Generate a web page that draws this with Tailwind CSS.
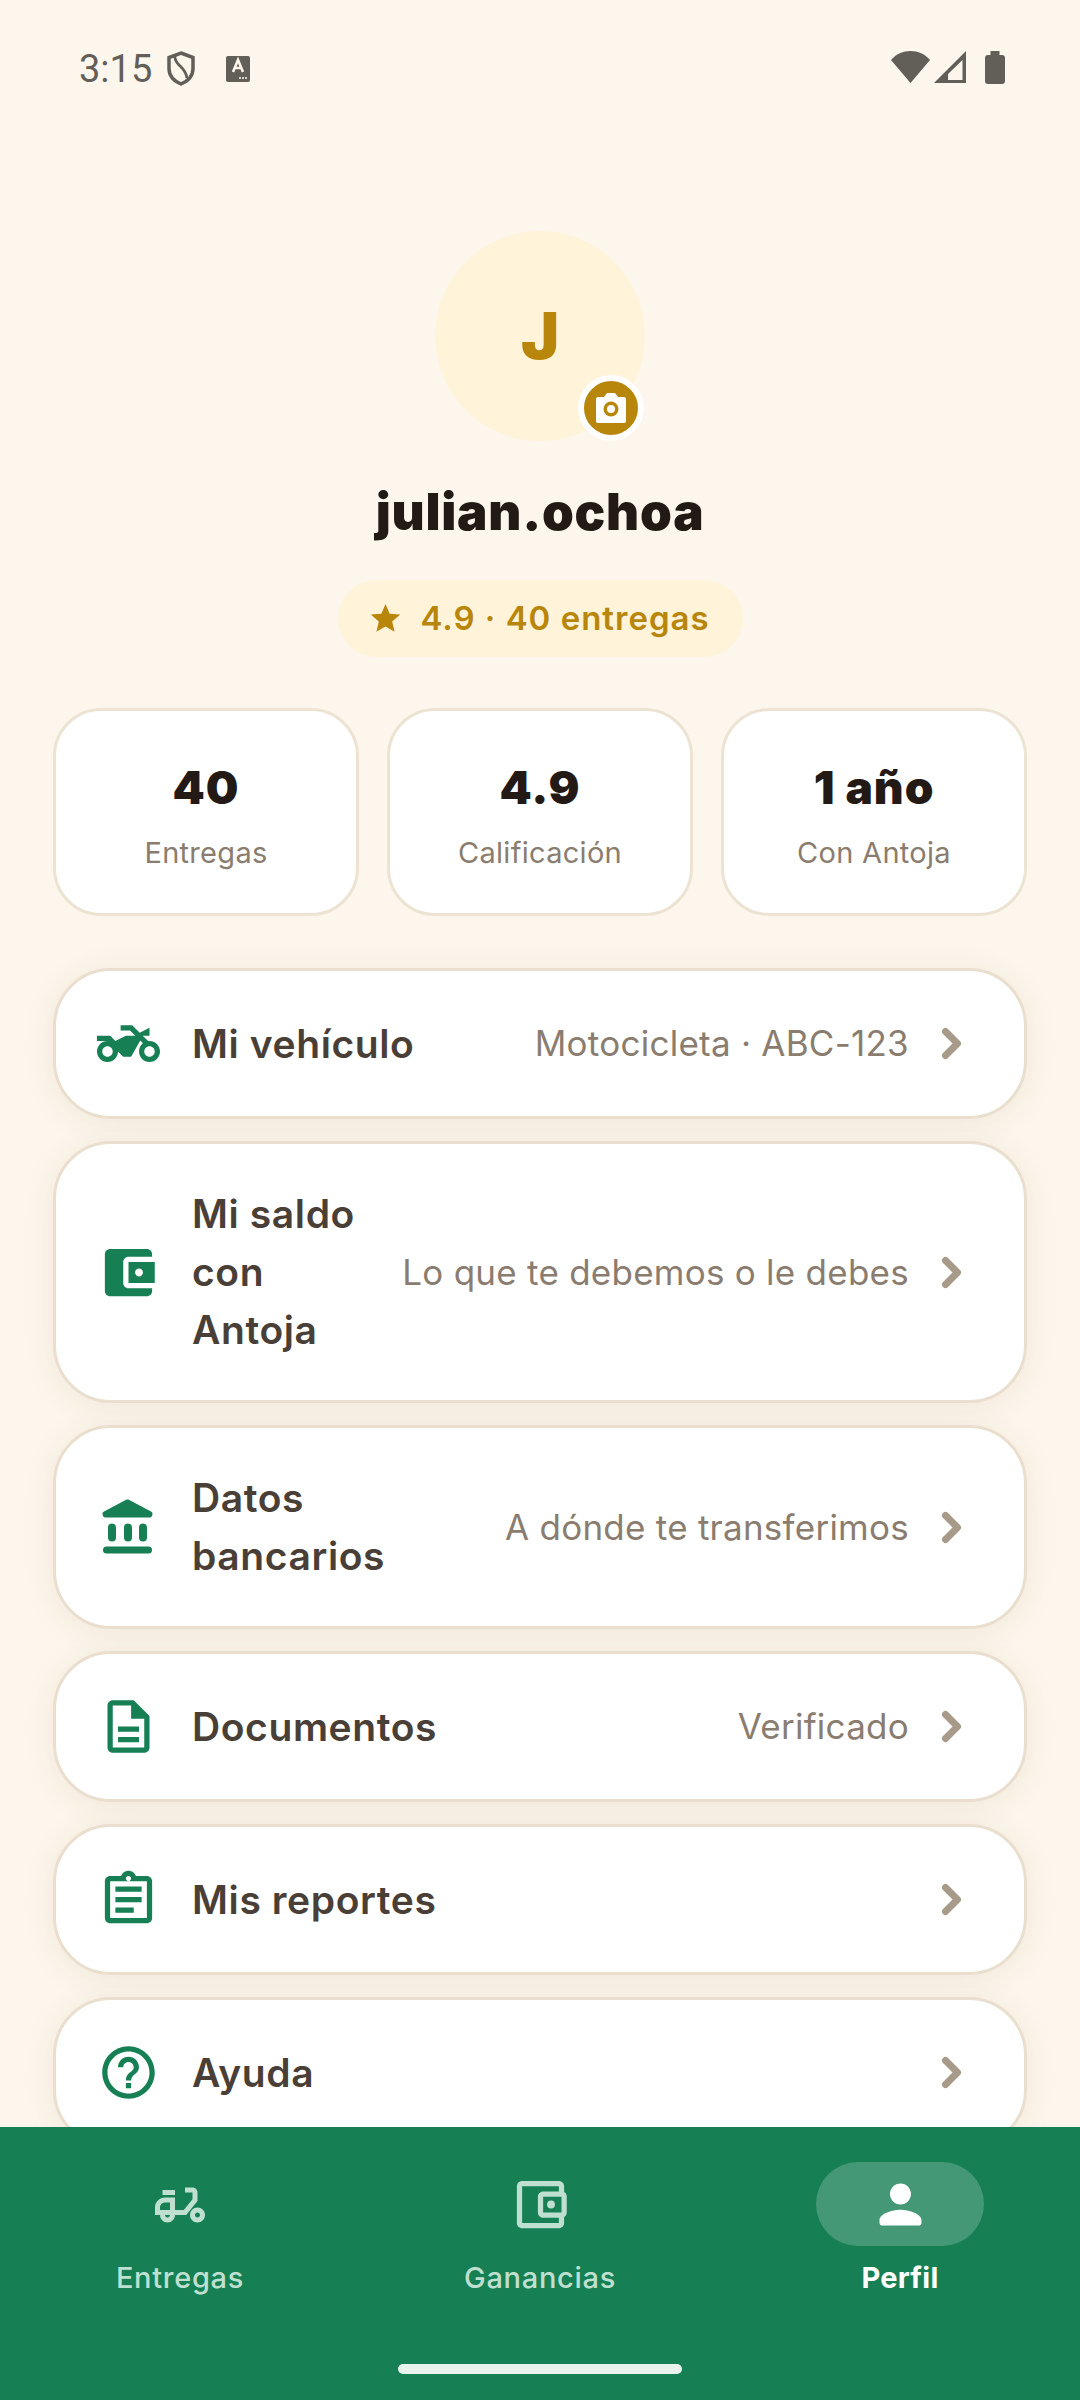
<!DOCTYPE html>
<html lang="es">
<head>
  <meta charset="UTF-8" />
  <title>Perfil</title>
  <script src="https://cdn.jsdelivr.net/npm/@tailwindcss/browser@4"></script>
</head>
<body class="bg-[#FDF6EC] font-['Inter',sans-serif]">
  <div class="h-[2400px] w-[1080px] flex flex-col overflow-hidden">

    <!-- Contenido -->
    <main class="flex-1 overflow-hidden relative">
      <!-- Barra de estado -->
      <div class="h-[135px] pl-[79px] pr-[75px] pt-[51px] flex items-start justify-between text-[#625F59]">
        <div class="flex items-center h-[35px]">
          <span class="font-['Roboto',sans-serif] text-[38px] leading-none w-[88px]">3:15</span>
          <svg class="w-[28px] h-[35px]" viewBox="0 0 28 35" fill="none" stroke="currentColor" stroke-width="3.500"><path d="M14 2l12 4.500v11c0 7-5 12.500-12 15.500C7 30 2 24.500 2 17.500v-11z"/><path d="M8 4c-.5 4 1 7 4 10s7 6 8 13" stroke-width="2.800"/></svg>
          <svg class="w-[24px] h-[26px] ml-[31px]" viewBox="0 0 24 26"><rect width="24" height="26" rx="2" fill="currentColor"/><path d="M7 16l5-12 5 12M9 12h6" stroke="#FDF6EC" stroke-width="2.600" fill="none"/><circle cx="14" cy="22" r="1" fill="#FDF6EC"/><circle cx="17" cy="22" r="1" fill="#FDF6EC"/><circle cx="20" cy="22" r="1" fill="#FDF6EC"/></svg>
        </div>
        <div class="flex items-start">
          <svg class="w-[39px] h-[32px]" viewBox="0 0 39 32"><path d="M0 9C5 3 12 0 19.500 0S34 3 39 9L19.500 32z" fill="currentColor"/></svg>
          <svg class="w-[32px] h-[32px] ml-[4px]" viewBox="0 0 32 32"><path fill-rule="evenodd" d="M0 32 32 0v32zM14 29h14.500V9L14 23z" fill="currentColor"/></svg>
          <svg class="w-[20px] h-[33px] ml-[19px]" viewBox="0 0 20 33"><path d="M5.500 0h9v4H17c2 0 3 1 3 3v23c0 2-1 3-3 3H3c-2 0-3-1-3-3V7c0-2 1-3 3-3h2.500z" fill="currentColor"/></svg>
        </div>
      </div>

      <!-- Encabezado de perfil -->
      <section class="flex flex-col items-center pt-[96px]">
        <div class="relative w-[210px] h-[210px] rounded-full bg-[#FFF3D9] flex items-center justify-center">
          <span class="font-black text-[64px] leading-none text-[#B8860B]">J</span>
          <div class="absolute right-[1px] bottom-0 w-[66px] h-[66px] rounded-full bg-[#B8860B] border-[6px] border-white flex items-center justify-center">
            <svg class="w-[36px] h-[36px]" viewBox="0 0 36 36"><path d="M5 7h6l3-4h8l3 4h6c1.500 0 2 1 2 2v22c0 1-.5 2-2 2H5c-1.500 0-2-1-2-2V9c0-1 .5-2 2-2z" fill="#fff"/><circle cx="18" cy="19" r="7.500" fill="#B8860B"/><circle cx="18" cy="19" r="4" fill="#fff"/></svg>
          </div>
        </div>
        <h1 class="mt-[37px] text-[51px] leading-[68px] font-black text-[#241A15] tracking-[0.015em]">julian.ochoa</h1>
        <div class="mt-[34px] h-[77px] w-[405px] rounded-full bg-[#FFF3D9] flex items-center justify-center gap-[19px] text-[#B8860B]">
          <svg class="w-[31px] h-[29px]" viewBox="0 0 24 23"><path d="M12 0l3.300 7.700 8.400.7-6.400 5.500 1.900 8.200L12 17.800 4.800 22.100l1.900-8.200L.3 8.400l8.400-.7z" fill="currentColor"/></svg>
          <span class="text-[33px] font-semibold tracking-[0.03em]">4.9 · 40 entregas</span>
        </div>
      </section>

      <!-- Estadisticas -->
      <section class="grid grid-cols-3 gap-[28px] mx-[53px] mt-[51px]">
        <div class="h-[208px] rounded-[48px] bg-white border-[3px] border-[#EDE3D3] flex flex-col items-center pt-[46px]">
          <div class="text-[46px] leading-[60px] font-black text-[#241A15] tracking-[0.02em]">40</div>
          <div class="mt-[14px] text-[29px] tracking-[0.3px] text-[#8A7D70]">Entregas</div>
        </div>
        <div class="h-[208px] rounded-[48px] bg-white border-[3px] border-[#EDE3D3] flex flex-col items-center pt-[46px]">
          <div class="text-[46px] leading-[60px] font-black text-[#241A15] tracking-[0.02em]">4.9</div>
          <div class="mt-[14px] text-[29px] tracking-[0.3px] text-[#8A7D70]">Calificación</div>
        </div>
        <div class="h-[208px] rounded-[48px] bg-white border-[3px] border-[#EDE3D3] flex flex-col items-center pt-[46px]">
          <div class="text-[46px] leading-[60px] font-black text-[#241A15] tracking-[0.02em]">1 año</div>
          <div class="mt-[14px] text-[29px] tracking-[0.3px] text-[#8A7D70]">Con Antoja</div>
        </div>
      </section>

      <!-- Menu -->
      <section class="flex flex-col gap-[22px] mx-[53px] mt-[52px]">
        <div class="flex items-center min-h-[151px] px-[41px] py-[41px] rounded-[58px] bg-white border-[3px] border-[#EADFCE] shadow-[0_4px_32px_rgba(90,60,30,0.08)]">
          <svg class="w-[63px] h-[63px] -my-[6px] shrink-0 text-[#167F54]" viewBox="0 0 24 24" fill="currentColor"><path d="M20 11c-.18 0-.36.03-.53.05L17.410 9H20V6l-3.720 1.860L13.410 5H9v2h3.590l2 2H11l-4 2-2-2H0v2h4c-2.210 0-4 1.790-4 4s1.790 4 4 4 4-1.790 4-4l2 2h3l3.490-6.100 1.010 1.010c-.91.730-1.500 1.840-1.500 3.090 0 2.210 1.790 4 4 4s4-1.790 4-4-1.790-4-4-4zM4 17c-1.100 0-2-.9-2-2s.9-2 2-2 2 .9 2 2-.9 2-2 2zm16 0c-1.100 0-2-.9-2-2s.9-2 2-2 2 .9 2 2-.9 2-2 2z"/></svg>
          <div class="flex-1 min-w-0 ml-[32px] text-[39px] tracking-[0.6px] leading-[58px] font-[590] text-[#4A3F37]">Mi vehículo</div>
          <div class="ml-[22px] whitespace-nowrap text-[35px] tracking-[0.25px] text-[#8A7D70]">Motocicleta · ABC-123</div>
          <svg class="w-[63px] h-[63px] -my-[6px] ml-[11px] shrink-0 text-[#A89A88]" viewBox="0 0 63 63" fill="none" stroke="currentColor" stroke-width="7" stroke-linecap="round" stroke-linejoin="round"><path d="M25.500 19.500l12 12-12 12"/></svg>
        </div>
        <div class="flex items-center min-h-[151px] px-[41px] py-[41px] rounded-[58px] bg-white border-[3px] border-[#EADFCE] shadow-[0_4px_32px_rgba(90,60,30,0.08)]">
          <svg class="w-[63px] h-[63px] -my-[6px] shrink-0 text-[#167F54]" viewBox="0 0 24 24" fill="currentColor"><path d="M21 18v1c0 1.100-.9 2-2 2H5c-1.110 0-2-.9-2-2V5c0-1.100.89-2 2-2h14c1.100 0 2 .9 2 2v1h-9c-1.110 0-2 .9-2 2v8c0 1.100.89 2 2 2h9zm-9-2h10V8H12v8zm4-2.500c-.83 0-1.500-.67-1.500-1.500s.67-1.500 1.500-1.500 1.500.67 1.500 1.500-.67 1.500-1.500 1.500z"/></svg>
          <div class="flex-1 min-w-0 ml-[32px] text-[39px] tracking-[0.6px] leading-[58px] font-[590] text-[#4A3F37]">Mi saldo con Antoja</div>
          <div class="ml-[22px] whitespace-nowrap text-[35px] tracking-[0.25px] text-[#8A7D70]">Lo que te debemos o le debes</div>
          <svg class="w-[63px] h-[63px] -my-[6px] ml-[11px] shrink-0 text-[#A89A88]" viewBox="0 0 63 63" fill="none" stroke="currentColor" stroke-width="7" stroke-linecap="round" stroke-linejoin="round"><path d="M25.500 19.500l12 12-12 12"/></svg>
        </div>
        <div class="flex items-center min-h-[151px] px-[41px] py-[41px] rounded-[58px] bg-white border-[3px] border-[#EADFCE] shadow-[0_4px_32px_rgba(90,60,30,0.08)]">
          <svg class="w-[63px] h-[63px] -my-[6px] shrink-0 text-[#167F54]" viewBox="0 0 63 63" fill="currentColor"><path d="M28.700 4 7 15.500c-1 .5-1.500 1.200-1.500 2.200 0 2 1.200 3.800 3 3.800h44c1.800 0 3-1.800 3-3.800 0-1-.5-1.700-1.500-2.200L32.300 4c-1.200-.6-2.400-.6-3.600 0z"/><rect x="11" y="27.500" width="8" height="18" rx="4"/><rect x="27" y="27.500" width="8" height="18" rx="4"/><rect x="42" y="27.500" width="8" height="18" rx="4"/><rect x="6" y="50.500" width="49" height="7" rx="3.500"/></svg>
          <div class="flex-1 min-w-0 ml-[32px] text-[39px] tracking-[0.6px] leading-[58px] font-[590] text-[#4A3F37]">Datos bancarios</div>
          <div class="ml-[22px] whitespace-nowrap text-[35px] tracking-[0.25px] text-[#8A7D70]">A dónde te transferimos</div>
          <svg class="w-[63px] h-[63px] -my-[6px] ml-[11px] shrink-0 text-[#A89A88]" viewBox="0 0 63 63" fill="none" stroke="currentColor" stroke-width="7" stroke-linecap="round" stroke-linejoin="round"><path d="M25.500 19.500l12 12-12 12"/></svg>
        </div>
        <div class="flex items-center min-h-[151px] px-[41px] py-[41px] rounded-[58px] bg-white border-[3px] border-[#EADFCE] shadow-[0_4px_32px_rgba(90,60,30,0.08)]">
          <svg class="w-[63px] h-[63px] -my-[6px] shrink-0 text-[#167F54]" viewBox="0 0 24 24" fill="currentColor"><path d="M14 2H6c-1.100 0-2 .9-2 2v16c0 1.100.89 2 1.990 2H18c1.100 0 2-.9 2-2V8l-6-6zm4 18H6V4h7v5h5v11zM8 12h8v2H8zm0 4h8v2H8z"/></svg>
          <div class="flex-1 min-w-0 ml-[32px] text-[39px] tracking-[0.6px] leading-[58px] font-[590] text-[#4A3F37]">Documentos</div>
          <div class="ml-[22px] whitespace-nowrap text-[35px] tracking-[0.25px] text-[#8A7D70]">Verificado</div>
          <svg class="w-[63px] h-[63px] -my-[6px] ml-[11px] shrink-0 text-[#A89A88]" viewBox="0 0 63 63" fill="none" stroke="currentColor" stroke-width="7" stroke-linecap="round" stroke-linejoin="round"><path d="M25.500 19.500l12 12-12 12"/></svg>
        </div>
        <div class="flex items-center min-h-[151px] px-[41px] py-[41px] rounded-[58px] bg-white border-[3px] border-[#EADFCE] shadow-[0_4px_32px_rgba(90,60,30,0.08)]">
          <svg class="w-[63px] h-[63px] -my-[6px] shrink-0 text-[#167F54]" viewBox="0 0 24 24" fill="currentColor"><path d="M19 3h-4.180C14.400 1.840 13.300 1 12 1c-1.300 0-2.400.84-2.820 2H5c-1.100 0-2 .9-2 2v14c0 1.100.9 2 2 2h14c1.100 0 2-.9 2-2V5c0-1.100-.9-2-2-2zm-7 0c.55 0 1 .45 1 1s-.45 1-1 1-1-.45-1-1 .45-1 1-1zm7 16H5V5h14v14zM7 7h10v2H7zm0 4h10v2H7zm0 4h7v2H7z"/></svg>
          <div class="flex-1 min-w-0 ml-[32px] text-[39px] tracking-[0.6px] leading-[58px] font-[590] text-[#4A3F37]">Mis reportes</div>
          <svg class="w-[63px] h-[63px] -my-[6px] ml-[11px] shrink-0 text-[#A89A88]" viewBox="0 0 63 63" fill="none" stroke="currentColor" stroke-width="7" stroke-linecap="round" stroke-linejoin="round"><path d="M25.500 19.500l12 12-12 12"/></svg>
        </div>
        <div class="flex items-center min-h-[151px] px-[41px] py-[41px] rounded-[58px] bg-white border-[3px] border-[#EADFCE] shadow-[0_4px_32px_rgba(90,60,30,0.08)]">
          <svg class="w-[63px] h-[63px] -my-[6px] shrink-0 text-[#167F54]" viewBox="0 0 24 24" fill="currentColor"><path d="M11 18h2v-2h-2v2zm1-16C6.480 2 2 6.480 2 12s4.480 10 10 10 10-4.480 10-10S17.520 2 12 2zm0 18c-4.410 0-8-3.590-8-8s3.590-8 8-8 8 3.590 8 8-3.590 8-8 8zm0-14c-2.210 0-4 1.790-4 4h2c0-1.100.9-2 2-2s2 .9 2 2c0 2-3 1.750-3 5h2c0-2.250 3-2.500 3-5 0-2.210-1.790-4-4-4z"/></svg>
          <div class="flex-1 min-w-0 ml-[32px] text-[39px] tracking-[0.6px] leading-[58px] font-[590] text-[#4A3F37]">Ayuda</div>
          <svg class="w-[63px] h-[63px] -my-[6px] ml-[11px] shrink-0 text-[#A89A88]" viewBox="0 0 63 63" fill="none" stroke="currentColor" stroke-width="7" stroke-linecap="round" stroke-linejoin="round"><path d="M25.500 19.500l12 12-12 12"/></svg>
        </div>
      </section>
    </main>

    <!-- Navegacion inferior -->
    <nav class="h-[273px] shrink-0 bg-[#167F54] relative">
      <div class="grid grid-cols-3 pt-[35px]">
        <div class="flex flex-col items-center text-[#BFE0D0]">
          <div class="w-[168px] h-[84px] flex items-center justify-center">
            <svg class="w-[60px] h-[60px] mt-[2px]" viewBox="0 0 24 24" fill="currentColor"><path d="M19 7c0-1.100-.9-2-2-2h-3v2h3v2.650L13.520 14H10V9H6c-2.210 0-4 1.790-4 4v3h2c0 1.660 1.340 3 3 3s3-1.340 3-3h4.480L19 10.350V7zM4 14v-1c0-1.100.9-2 2-2h2v3H4zm3 3c-.55 0-1-.45-1-1h2c0 .55-.45 1-1 1z"/><path d="M5 6h5v2H5z"/><path d="M19 13c-1.660 0-3 1.340-3 3s1.340 3 3 3 3-1.340 3-3-1.340-3-3-3zm0 4c-.55 0-1-.45-1-1s.45-1 1-1 1 .45 1 1-.45 1-1 1z"/></svg>
          </div>
          <span class="mt-[12px] text-[29px] font-[550] tracking-[0.7px] leading-[40px]">Entregas</span>
        </div>
        <div class="flex flex-col items-center text-[#BFE0D0]">
          <div class="w-[168px] h-[84px] flex items-center justify-center">
            <svg class="w-[63px] h-[63px]" viewBox="0 0 24 24" fill="currentColor"><path d="M21 7.280V5c0-1.100-.9-2-2-2H5c-1.110 0-2 .9-2 2v14c0 1.100.89 2 2 2h14c1.100 0 2-.9 2-2v-2.280c.59-.35 1-.98 1-1.720V9c0-.74-.41-1.370-1-1.720zM20 9v6h-7V9h7zM5 19V5h14v2h-6c-1.100 0-2 .9-2 2v6c0 1.100.9 2 2 2h6v2H5z"/><circle cx="16" cy="12" r="1.500"/></svg>
          </div>
          <span class="mt-[12px] text-[29px] font-[550] tracking-[0.7px] leading-[40px]">Ganancias</span>
        </div>
        <div class="flex flex-col items-center text-white">
          <div class="w-[168px] h-[84px] rounded-full bg-white/20 flex items-center justify-center">
            <svg class="w-[63px] h-[63px]" viewBox="0 0 24 24" fill="currentColor"><path d="M12 12c2.210 0 4-1.790 4-4s-1.790-4-4-4-4 1.790-4 4 1.790 4 4 4zm0 2c-2.670 0-8 1.340-8 4v1c0 .55.45 1 1 1h14c.55 0 1-.45 1-1v-1c0-2.660-5.330-4-8-4z"/></svg>
          </div>
          <span class="mt-[12px] text-[29px] font-bold tracking-[0.2px] leading-[40px]">Perfil</span>
        </div>
      </div>
      <div class="absolute left-[398px] bottom-[26px] w-[284px] h-[10px] rounded-full bg-[#E9F3EE]"></div>
    </nav>
  </div>
</body>
</html>
